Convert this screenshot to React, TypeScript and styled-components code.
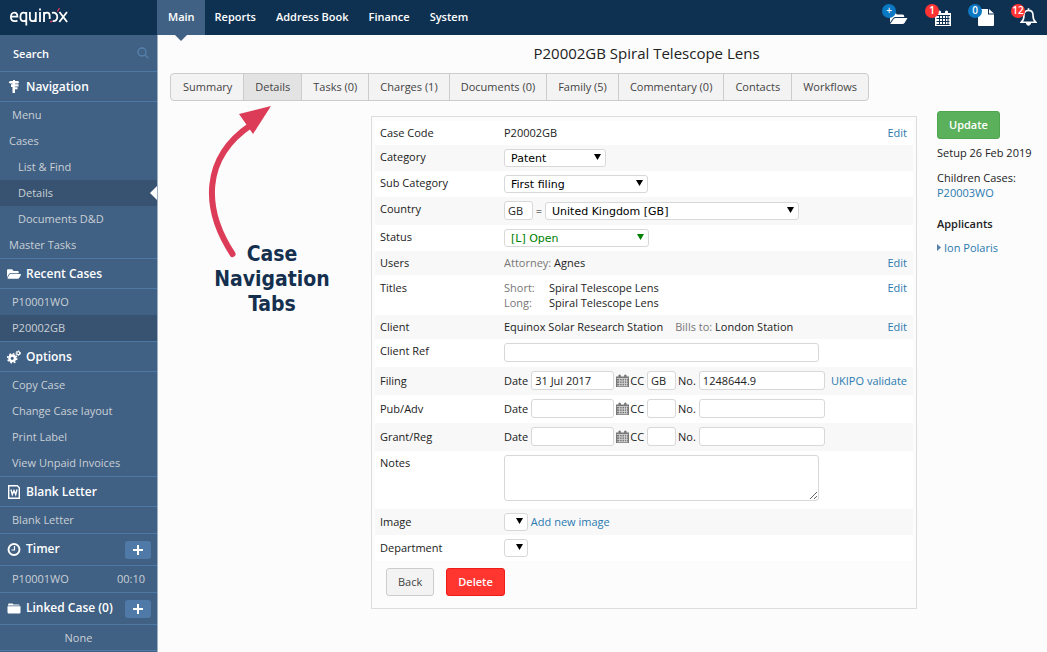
import React from "react";
import styled, { createGlobalStyle, css } from "styled-components";
import { FaFolderOpen } from "react-icons/fa";

const Global = createGlobalStyle`
  *, *::before, *::after { box-sizing: border-box; }
  body { margin: 0; background: #fcfcfc; color: #222; font: 11px/15px "Open Sans", sans-serif; }
  button, input, textarea, select { font: inherit; color: inherit; }
  a { color: #2a7ab0; text-decoration: none; }
`;

const Header = styled.header`
  display: flex;
  height: 35px;
  background: #0f3151;
  color: #fff;
`;
const Brand = styled.div`
  width: 158px;
  flex: none;
  padding: 6px 0 0 8px;
  border-right: 1px solid #3f6184;
`;
const TopNav = styled.nav`
  display: flex;
  flex: 1;
`;
const TopLink = styled.a<{ $on?: boolean }>`
  position: relative;
  padding: 0 10px;
  line-height: 34px;
  font-weight: 600;
  color: #fff;
  ${(p) =>
    p.$on &&
    css`
      background: #416184;
      &::after {
        content: "";
        position: absolute;
        top: 35px;
        left: 50%;
        margin-left: -6px;
        border: 6px solid transparent;
        border-top-color: #416184;
        border-bottom: 0;
      }
    `}
`;
const Alerts = styled.div`
  display: flex;
  gap: 17px;
  padding: 3px 10px 0 0;
`;
const Alert = styled.button`
  position: relative;
  width: 26px;
  height: 23px;
  padding: 0;
  border: 0;
  background: none;
  color: #fff;
  svg { position: absolute; right: 0; bottom: 0; }
`;
const Badge = styled.span<{ $color: string }>`
  position: absolute;
  z-index: 1;
  left: 0;
  top: 1px;
  width: 14px;
  height: 14px;
  border-radius: 7px;
  background: ${(p) => p.$color};
  font-size: 10px;
  line-height: 13px;
  font-weight: 600;
  text-align: center;
`;

const Page = styled.div`
  display: flex;
  align-items: stretch;
  min-height: calc(100vh - 35px);
`;
const Sidebar = styled.aside`
  width: 158px;
  flex: none;
  background: #416184;
  border-right: 1px solid #9db0c4;
  color: #c9d0d6;
`;
const SearchBox = styled.label`
  display: flex;
  align-items: center;
  height: 36px;
  padding: 0 8px 0 13px;
  color: #5580ad;
`;
const SearchInput = styled.input`
  flex: 1;
  min-width: 0;
  padding: 0;
  border: 0;
  outline: 0;
  background: none;
  font-weight: 600;
  &::placeholder { color: #fff; opacity: 1; }
`;
const SideHead = styled.h2<{ $tall?: boolean }>`
  display: flex;
  align-items: center;
  gap: 5px;
  height: ${(p) => (p.$tall ? 33 : 31)}px;
  margin: 0;
  padding: 0 6px 0 7px;
  border: solid #4f79a5;
  border-width: 1px 0;
  font-size: 12px;
  line-height: 18px;
  font-weight: 600;
  color: #fff;
  svg { flex: none; }
  span { flex: 1; white-space: nowrap; padding: ${(p) => (p.$tall ? "0 0 1px" : "1px 0 0")}; }
`;
const SideItem = styled.a<{ $pad?: number; $on?: boolean }>`
  position: relative;
  display: flex;
  justify-content: space-between;
  height: 26px;
  padding: 0 12px 0 ${(p) => p.$pad ?? 12}px;
  line-height: 26px;
  color: #c9d0d6;
  background: ${(p) => (p.$on ? "#385371" : "none")};
`;
const Pointer = styled.span`
  position: absolute;
  right: 0;
  top: 6px;
  border: 7px solid transparent;
  border-right-color: #fcfcfc;
  border-left: 0;
`;
const None = styled.div`
  height: 26px;
  line-height: 26px;
  text-align: center;
  border-bottom: 1px solid #4f79a5;
`;
const Plus = styled.button`
  display: grid;
  place-items: center;
  width: 26px;
  height: 18px;
  padding: 0;
  border: 0;
  border-radius: 3px;
  background: #4f7aa8;
  color: #fff;
`;

const Main = styled.main`
  position: relative;
  flex: 1;
  min-width: 0;
  padding: 8px 16px 44px 12px;
`;
const Title = styled.h1`
  margin: 0 0 10px;
  padding-left: 92px;
  font-size: 15px;
  line-height: 20px;
  font-weight: 400;
  text-align: center;
`;
const Tabs = styled.nav`
  display: inline-flex;
  border: 1px solid #ccc;
  border-radius: 4px;
  background: #f3f3f3;
  overflow: hidden;
`;
const Tab = styled.a<{ $on?: boolean }>`
  padding: 0 11px;
  line-height: 26px;
  white-space: nowrap;
  color: #444;
  background: ${(p) => (p.$on ? "#e3e3e3" : "none")};
  &:first-child { padding-left: 12px; }
  & + & { border-left: 1px solid #ccc; }
`;
const Content = styled.div`
  display: flex;
  align-items: flex-start;
  gap: 20px;
  margin-top: 10px;
  padding-left: 201px;
`;
const Panel = styled.form`
  flex: 1;
  margin-top: 5px;
  padding: 4px 3px 12px;
  border: 1px solid #ddd;
`;
const Row = styled.div<{ $h: number; $shade?: boolean; $mid?: boolean; $top?: number }>`
  display: flex;
  height: ${(p) => p.$h}px;
  padding: ${(p) => p.$top ?? 0}px 6px 0 5px;
  line-height: ${(p) => (p.$mid ? p.$h : 24)}px;
  background: ${(p) => (p.$shade ? "#f8f8f8" : "#fff")};
`;
const Name = styled.label`
  flex: none;
  width: 124px;
`;
const Value = styled.div<{ $start?: boolean }>`
  display: flex;
  flex: 1;
  align-items: ${(p) => (p.$start ? "flex-start" : "center")};
  min-width: 0;
  padding: ${(p) => (p.$start ? "4px 0 0" : "0 0 1px")};
  line-height: 15px;
  white-space: nowrap;
`;
const Muted = styled.span`
  color: #777;
`;
const Bill = styled(Muted)`
  margin-left: 12px;
`;
const Pairs = styled.dl`
  display: grid;
  grid-template-columns: 45px auto;
  margin: 0;
  dt { color: #777; }
  dd { margin: 0; }
`;
const fieldBox = css`
  border: 1px solid #d8d8d8;
  border-radius: 3px;
  background: #fff;
  outline: 0;
`;
const Field = styled.input<{ $w: number }>`
  ${fieldBox}
  width: ${(p) => p.$w}px;
  height: 19px;
  padding: 0 3px;
`;
const Notes = styled.textarea`
  ${fieldBox}
  width: 315px;
  height: 46px;
  margin: 0;
`;
const SelectWrap = styled.span<{ $w: number; $color?: string }>`
  position: relative;
  display: inline-flex;
  width: ${(p) => p.$w}px;
  color: ${(p) => p.$color ?? "#000"};
  svg { position: absolute; right: 5px; top: 5px; pointer-events: none; }
`;
const SelectBox = styled.select`
  ${fieldBox}
  appearance: none;
  width: 100%;
  height: 18px;
  padding: 1px 6px 0;
  font-family: "DejaVu Sans", sans-serif;
  line-height: 15px;
`;
const Inline = styled.label`
  display: inline-flex;
  align-items: center;
  gap: 3px;
  & + & { margin-left: 2px; }
`;
const CalButton = styled.button`
  display: flex;
  margin: 0 1px 0 2px;
  padding: 0;
  border: 0;
  background: none;
  color: #777;
`;
const EndLink = styled.a`
  margin-left: auto;
`;
const Actions = styled.div`
  display: flex;
  gap: 12px;
  padding: 7px 0 0 11px;
`;
const Button = styled.button<{ $bg: string; $line: string; $plain?: boolean }>`
  height: 28px;
  padding: 0 11px 1px;
  border: 1px solid ${(p) => p.$line};
  border-radius: 3px;
  background: ${(p) => p.$bg};
  color: ${(p) => (p.$plain ? "#444" : "#fff")};
  font-weight: ${(p) => (p.$plain ? 400 : 600)};
`;
const Side = styled.aside`
  width: 94px;
  flex: none;
  white-space: nowrap;
  p { margin: 6px 0 10px; }
  h3 { margin: 16px 0 9px; font-size: 11px; line-height: 15px; font-weight: 600; }
`;
const Expand = styled.a`
  display: flex;
  align-items: center;
  gap: 3px;
`;
const Callout = styled.div`
  position: absolute;
  left: 47px;
  top: 68px;
  width: 134px;
  text-align: center;
  color: #15304f;
  font: bold 21px/25px "DejaVu Sans Condensed", "DejaVu Sans", sans-serif;
  svg { display: block; margin-bottom: -19px; }
`;

const Logo = () => (
  <svg width="62" height="22" viewBox="0 0 62 22" fill="none" stroke="#fff" strokeWidth="1.8">
    <path d="M3 10.600h6.400c0-2.600-1.200-4-3.100-4-2.100 0-3.400 1.700-3.400 4.400 0 2.700 1.400 4.200 3.700 4.200 1.100 0 1.900-.2 2.800-.6" />
    <path d="M18.300 19.500V6M18.300 8.200c-.6-1-1.500-1.500-2.600-1.500-2.100 0-3.300 1.600-3.300 4.300s1.200 4.200 3.100 4.200c1.200 0 2.200-.5 2.800-1.500" />
    <path d="M21.900 6v5.800c0 2.300.9 3.400 2.700 3.400 2.100 0 3.200-1.300 3.200-3.800V6M27.800 10v6M32 6v10M32 2.500v2" />
    <path d="M36 16V6M36 10c0-2.200 1.100-3.400 2.900-3.400 1.900 0 2.800 1.100 2.800 3.300V13" />
    <path d="M44 6.900c3.200-.9 5.300 1.200 5.300 4.100 0 2.900-1.800 4.500-4.700 4.100M51.500 6l7.600 10M59 6l-7.700 10" />
    <path d="M49.500 5.500l2-3.500M42 15.500h2.200" stroke="#d33a56" strokeWidth="1.400" />
  </svg>
);
const Magnifier = () => (
  <svg width="12" height="12" viewBox="0 0 12 12" fill="none" stroke="currentColor" strokeWidth="1.400">
    <circle cx="5" cy="5" r="4" />
    <path d="M8 8l3.300 3.300" />
  </svg>
);
const Sign = () => (
  <svg width="14" height="14" viewBox="0 0 14 14" fill="currentColor">
    <path d="M6 0h2v1h3l1.300 1.200L11 3.400H8v.8h3.500v2.400H8v.7h2.500v2H8V13H5.500V7H4V4.200h1.500v-.8H3L1.700 2.200 3 1h3z" />
  </svg>
);
const Cogs = () => (
  <svg width="14" height="14" viewBox="0 0 14 14" fill="none" stroke="currentColor">
    <circle cx="5.200" cy="8.300" r="2.800" strokeWidth="2.400" />
    <circle cx="5.200" cy="8.300" r="4.500" strokeWidth="1.600" strokeDasharray="1.800 1.734" />
    <circle cx="11.200" cy="3.200" r="1.500" strokeWidth="1.200" />
    <circle cx="11.200" cy="3.200" r="2.400" strokeWidth="1" strokeDasharray="1.200 1.313" />
  </svg>
);
const Word = () => (
  <svg width="14" height="14" viewBox="0 0 14 14" fill="none" stroke="currentColor" strokeWidth="1.400">
    <path d="M1.700.7h8.600l2 2v10.600H1.700z" />
    <path d="M4 4.500l1.300 5L7 5.500l1.700 4 1.300-5" />
  </svg>
);
const Clock = () => (
  <svg width="14" height="14" viewBox="0 0 14 14" fill="none" stroke="currentColor">
    <circle cx="7" cy="6.500" r="5.500" strokeWidth="1.900" />
    <path d="M7.500 3v4H4.500" strokeWidth="1.200" />
  </svg>
);
const Folder = () => (
  <svg width="14" height="14" viewBox="0 0 14 14" fill="currentColor">
    <path d="M1 3.500V2.800Q1 1.500 2.200 1.500h3q1 0 1.200 1h5Q12.500 2.500 12.700 3.500zM.5 4.300h13v6q0 1.200-1.200 1.200H1.700Q.5 11.500 .5 10.300z" />
  </svg>
);
const OpenFolder = () => (
  <svg width="19" height="15" viewBox="0 0 19 15" fill="currentColor">
    <path d="M1 11.500V3.500Q1 2 2.500 2h3.700q1.300 0 1.500 1.500h6q1.300 0 1.500 1.500v1H6.500Q5 6 4 7.300zM5 7.500Q5.700 7 6.500 7H18.500L15.500 12Q14.800 13 13.500 13H1.200z" />
  </svg>
);
const Calendar = ({ size = 16, bars = "#0f3151" }: { size?: number; bars?: string }) => (
  <svg width={size} height={size} viewBox="0 0 16 16">
    <path fill="currentColor" d="M0 3h3V1.500q1.500-2 3 0V3h4V1.500q1.500-2 3 0V3h3v13H0z" />
    <path stroke={bars} strokeWidth="1" d="M1 5.500h14M4.500 6v9M7.500 6v9M10.500 6v9M13 6v9M1.500 8.500h13M1.500 11.500h13M1.500 14.500h13" />
  </svg>
);
const Doc = () => (
  <svg width="16" height="18" viewBox="0 0 16 18" fill="currentColor">
    <path d="M0 1h10v5.500h6V17q0 1-1 1H1q-1 0-1-1zM11 1l5 4.600h-5z" />
  </svg>
);
const Bell = () => (
  <svg width="17" height="18" viewBox="0 0 17 18" fill="none" stroke="currentColor" strokeWidth="1.600">
    <path d="M8.500 2.400C5.500 2.400 4 4.600 4 7.200c0 3.600-1 5.600-2.700 7h14.400c-1.700-1.400-2.700-3.400-2.700-7 0-2.600-1.500-4.800-4.500-4.800zM8.500.3v2.200" />
    <path d="M6.300 15h4.400q-.4 2.300-2.200 2.300T6.300 15z" fill="currentColor" strokeWidth="1" />
  </svg>
);
const PlusSign = () => (
  <svg width="10" height="10" viewBox="0 0 10 10" stroke="currentColor" strokeWidth="2">
    <path d="M5 0v10M0 5h10" />
  </svg>
);

type SelectProps = { id?: string; label?: string; width: number; value: string; color?: string };
const Select = ({ id, label, width, value, color }: SelectProps) => (
  <SelectWrap $w={width} $color={color}>
    <SelectBox id={id} aria-label={label} defaultValue={value}>
      <option>{value}</option>
    </SelectBox>
    <svg width="7" height="6" viewBox="0 0 7 6" fill="currentColor"><path d="M0 0h7L3.500 6z" /></svg>
  </SelectWrap>
);

const FilingRow = ({ name, date, cc, no, shade, children }: {
  name: string; date?: string; cc?: string; no?: string; shade?: boolean; children?: React.ReactNode;
}) => (
  <Row $h={28} $shade={shade} $mid>
    <Name as="span">{name}</Name>
    <Value>
      <Inline>Date <Field $w={83} defaultValue={date} /></Inline>
      <CalButton type="button" aria-label={`${name} date`}><Calendar size={13} bars="#ddd" /></CalButton>
      <Inline>CC <Field $w={29} defaultValue={cc} /></Inline>
      <Inline>No. <Field $w={126} defaultValue={no} /></Inline>
      {children}
    </Value>
  </Row>
);

export default function App() {
  const tabs = ["Summary", "Details", "Tasks (0)", "Charges (1)", "Documents (0)", "Family (5)", "Commentary (0)", "Contacts", "Workflows"];
  return (
    <>
      <Global />
      <Header>
        <Brand role="img" aria-label="equinox"><Logo /></Brand>
        <TopNav>
          {["Main", "Reports", "Address Book", "Finance", "System"].map((t) => (
            <TopLink key={t} href="#" $on={t === "Main"}>{t}</TopLink>
          ))}
        </TopNav>
        <Alerts>
          <Alert aria-label="Open case"><Badge $color="#0a78c2">+</Badge><OpenFolder /></Alert>
          <Alert aria-label="Calendar"><Badge $color="#ff3333">1</Badge><Calendar /></Alert>
          <Alert aria-label="Documents"><Badge $color="#0a78c2">0</Badge><Doc /></Alert>
          <Alert aria-label="Notifications"><Badge $color="#ff3333">12</Badge><Bell /></Alert>
        </Alerts>
      </Header>
      <Page>
        <Sidebar>
          <SearchBox><SearchInput placeholder="Search" aria-label="Search" /><Magnifier /></SearchBox>
          <SideHead><Sign /><span>Navigation</span></SideHead>
          <SideItem href="#">Menu</SideItem>
          <SideItem href="#" $pad={9}>Cases</SideItem>
          <SideItem href="#" $pad={18}>List &amp; Find</SideItem>
          <SideItem href="#" $pad={18} $on>Details<Pointer /></SideItem>
          <SideItem href="#" $pad={18}>Documents D&amp;D</SideItem>
          <SideItem href="#" $pad={9}>Master Tasks</SideItem>
          <SideHead><FaFolderOpen size={14} /><span>Recent Cases</span></SideHead>
          <SideItem href="#">P10001WO</SideItem>
          <SideItem href="#" $on>P20002GB</SideItem>
          <SideHead><Cogs /><span>Options</span></SideHead>
          <SideItem href="#">Copy Case</SideItem>
          <SideItem href="#">Change Case layout</SideItem>
          <SideItem href="#">Print Label</SideItem>
          <SideItem href="#">View Unpaid Invoices</SideItem>
          <SideHead><Word /><span>Blank Letter</span></SideHead>
          <SideItem href="#">Blank Letter</SideItem>
          <SideHead $tall><Clock /><span>Timer</span><Plus aria-label="Add timer"><PlusSign /></Plus></SideHead>
          <SideItem href="#">P10001WO<span>00:10</span></SideItem>
          <SideHead $tall><Folder /><span>Linked Case (0)</span><Plus aria-label="Link case"><PlusSign /></Plus></SideHead>
          <None>None</None>
        </Sidebar>
        <Main>
          <Title>P20002GB Spiral Telescope Lens</Title>
          <Tabs>{tabs.map((t) => <Tab key={t} href="#" $on={t === "Details"}>{t}</Tab>)}</Tabs>
          <Content>
            <Panel>
              <Row $h={24}><Name as="span">Case Code</Name><Value>P20002GB<EndLink href="#">Edit</EndLink></Value></Row>
              <Row $h={26} $shade><Name htmlFor="category">Category</Name><Value><Select id="category" width={102} value="Patent" /></Value></Row>
              <Row $h={26}><Name htmlFor="sub">Sub Category</Name><Value><Select id="sub" width={144} value="First filing" /></Value></Row>
              <Row $h={28} $shade><Name htmlFor="country">Country</Name><Value><Field id="country" $w={29} defaultValue="GB" />&nbsp;=&nbsp;<Select label="Country name" width={254} value="United Kingdom [GB]" /></Value></Row>
              <Row $h={26}><Name htmlFor="status">Status</Name><Value><Select id="status" width={145} value="[L] Open" color="#008000" /></Value></Row>
              <Row $h={24} $shade><Name as="span">Users</Name><Value><Muted>Attorney:</Muted>&nbsp;Agnes<EndLink href="#">Edit</EndLink></Value></Row>
              <Row $h={40} $top={1}>
                <Name as="span">Titles</Name>
                <Value $start>
                  <Pairs><dt>Short:</dt><dd>Spiral Telescope Lens</dd><dt>Long:</dt><dd>Spiral Telescope Lens</dd></Pairs>
                  <EndLink href="#">Edit</EndLink>
                </Value>
              </Row>
              <Row $h={24} $shade><Name as="span">Client</Name><Value>Equinox Solar Research Station<Bill>Bills to:</Bill>&nbsp;London Station<EndLink href="#">Edit</EndLink></Value></Row>
              <Row $h={28}><Name htmlFor="ref">Client Ref</Name><Value><Field id="ref" $w={315} /></Value></Row>
              <FilingRow name="Filing" date="31 Jul 2017" cc="GB" no="1248644.9" shade><EndLink href="#">UKIPO validate</EndLink></FilingRow>
              <FilingRow name="Pub/Adv" />
              <FilingRow name="Grant/Reg" shade />
              <Row $h={58}><Name htmlFor="notes">Notes</Name><Value $start><Notes id="notes" /></Value></Row>
              <Row $h={26} $shade $mid><Name htmlFor="image">Image</Name><Value><Select id="image" width={24} value="" />&nbsp;<a href="#">Add new image</a></Value></Row>
              <Row $h={26} $mid><Name htmlFor="dept">Department</Name><Value><Select id="dept" width={24} value="" /></Value></Row>
              <Actions>
                <Button type="button" $bg="#f3f3f3" $line="#ccc" $plain>Back</Button>
                <Button type="button" $bg="#ff3530" $line="#f01c17">Delete</Button>
              </Actions>
            </Panel>
            <Side>
              <Button type="button" $bg="#5bb05b" $line="#4fa64f">Update</Button>
              <p>Setup 26 Feb 2019</p>
              <div>Children Cases:</div>
              <a href="#">P20003WO</a>
              <h3>Applicants</h3>
              <Expand href="#"><svg width="4" height="7" viewBox="0 0 4 7" fill="#5580ad"><path d="M0 0l4 3.500L0 7z" /></svg>Ion Polaris</Expand>
            </Side>
          </Content>
          <Callout>
            <svg width="134" height="158" viewBox="0 0 134 158">
              <path d="M27.500 151C-2 106-3 55 46 22" fill="none" stroke="#dc3c57" strokeWidth="6" strokeLinecap="round" />
              <path d="M66 3L34 11l14 20z" fill="#dc3c57" />
            </svg>
            Case<br />Navigation<br />Tabs
          </Callout>
        </Main>
      </Page>
    </>
  );
}
